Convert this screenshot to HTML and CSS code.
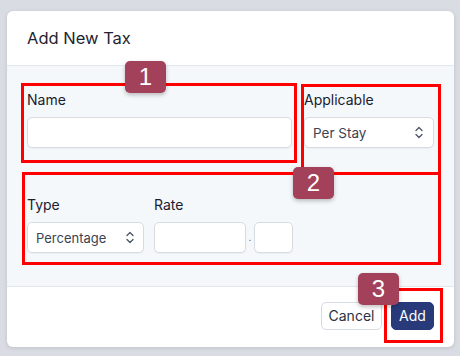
FILE: index.html
```html
<!DOCTYPE html>
<html>
<head>
<meta charset="utf-8">
<link rel="stylesheet" href="styles.css">
</head>
<body>
<div class="modal">
  <div class="modal-header">Add New Tax</div>
  <div class="modal-body">
    <div class="row row-top">
      <div class="field field-name">
        <label class="label">Name</label>
        <div class="input"></div>
      </div>
      <div class="field field-app">
        <label class="label">Applicable</label>
        <div class="select"><span>Per Stay</span>
          <svg class="chev" width="8" height="13" viewBox="0 0 8 13"><path d="M1 4.5 L4 1.5 L7 4.5 M1 8.5 L4 11.5 L7 8.5" fill="none" stroke="#4b5563" stroke-width="1.3" stroke-linecap="round" stroke-linejoin="round"/></svg>
        </div>
      </div>
    </div>
    <div class="row row-bottom">
      <div class="field field-type">
        <label class="label">Type</label>
        <div class="select"><span>Percentage</span>
          <svg class="chev" width="8" height="13" viewBox="0 0 8 13"><path d="M1 4.5 L4 1.5 L7 4.5 M1 8.5 L4 11.5 L7 8.5" fill="none" stroke="#4b5563" stroke-width="1.3" stroke-linecap="round" stroke-linejoin="round"/></svg>
        </div>
      </div>
      <div class="field field-rate">
        <label class="label">Rate</label>
        <div class="rate-inputs">
          <div class="input rate-main"></div>
          <span class="dot">.</span>
          <div class="input rate-dec"></div>
        </div>
      </div>
    </div>
  </div>
  <div class="modal-footer">
    <button class="btn btn-cancel">Cancel</button>
    <button class="btn btn-add">Add</button>
  </div>
</div>

<div class="anno box1"></div>
<div class="anno box2"></div>
<div class="anno box2b"></div>
<div class="anno box3"></div>
<div class="badge badge1">1</div>
<div class="badge badge2">2</div>
<div class="badge badge3">3</div>
</body>
</html>
```
FILE: styles.css
```css
html, body {
  margin: 0;
  padding: 0;
}
body {
  background: #d9dce3;
  width: 460px;
  height: 356px;
  overflow: hidden;
  position: relative;
  font-family: Inter, "Liberation Sans", Arial, sans-serif;
  color: #1e2433;
}
.modal {
  position: relative;
  margin: 11px 0 0 7px;
  width: 447px;
  height: 336px;
  background: #ffffff;
  border-radius: 6px;
  box-shadow: 0 1px 4px rgba(0,0,0,0.12);
  overflow: hidden;
  display: flex;
  flex-direction: column;
}
.modal-header {
  height: 55px;
  box-sizing: border-box;
  padding: 17px 20px 0 20px;
  font-size: 16.5px;
  font-weight: 400;
  line-height: 20px;
  border-bottom: 1px solid #e3e6ee;
  color: #1e2433;
}
.modal-body {
  background: #f5f8fb;
  height: 221px;
  box-sizing: border-box;
  padding: 24px 20px 0 20px;
  border-bottom: 1px solid #e3e6ee;
}
.row {
  display: flex;
}
.row-top {
  gap: 12px;
}
.row-bottom {
  margin-top: 47px;
  gap: 10px;
}
.field {
  display: flex;
  flex-direction: column;
}
.field-name { width: 265px; }
.field-app { width: 130px; }
.field-type { width: 117px; }
.label {
  font-size: 14px;
  font-weight: 400;
  line-height: 20px;
  margin-bottom: 7px;
  color: #1a2030;
}
.input, .select {
  height: 31px;
  box-sizing: border-box;
  background: #fff;
  border: 1px solid #d7dbe2;
  border-radius: 5px;
  box-shadow: 0 1px 1px rgba(0,0,0,0.04);
}
.select {
  display: flex;
  align-items: center;
  justify-content: space-between;
  padding: 0 10px 0 8px;
  font-size: 13.5px;
  color: #3b4252;
}
.field-type .select { padding: 0 9px 0 8px; font-size: 13px; }
.rate-inputs {
  display: flex;
  align-items: center;
}
.rate-main { width: 92px; }
.dot {
  width: 8px;
  text-align: center;
  font-size: 10px;
  color: #555;
  line-height: 31px;
}
.rate-dec { width: 39px; }
.modal-footer {
  flex: 1;
  display: flex;
  justify-content: flex-end;
  align-items: flex-start;
  gap: 9px;
  padding: 15px 20px 0 0;
}
.btn {
  font-family: Inter, "Liberation Sans", Arial, sans-serif;
  font-size: 14px;
  height: 28px;
  border-radius: 5px;
  box-sizing: border-box;
  cursor: pointer;
  line-height: 1;
}
.btn-cancel {
  width: 61px;
  background: #fff;
  border: 1px solid #d7dbe2;
  color: #2a3140;
}
.btn-add {
  width: 43px;
  background: #283a7a;
  border: 1px solid #283a7a;
  color: #fff;
}
.anno {
  position: absolute;
  border: 3px solid #ff0000;
  box-sizing: border-box;
}
.box1 { left: 21px; top: 83px; width: 276px; height: 80px; }
.box2 { left: 301px; top: 84px; width: 140px; height: 91px; }
.box2b { left: 22px; top: 172px; width: 419px; height: 93px; }
.box3 { left: 384px; top: 288px; width: 59px; height: 55px; }
.badge {
  position: absolute;
  width: 41px;
  height: 32px;
  background: #a3405a;
  border-radius: 5px;
  color: #fff;
  font-size: 24px;
  font-family: "Liberation Sans", Arial, sans-serif;
  line-height: 32px;
  text-align: center;
  box-shadow: 0 2px 4px rgba(0,0,0,0.25);
}
.badge1 { left: 125px; top: 61px; }
.badge2 { left: 293px; top: 167px; }
.badge3 { left: 358px; top: 273px; }
```
